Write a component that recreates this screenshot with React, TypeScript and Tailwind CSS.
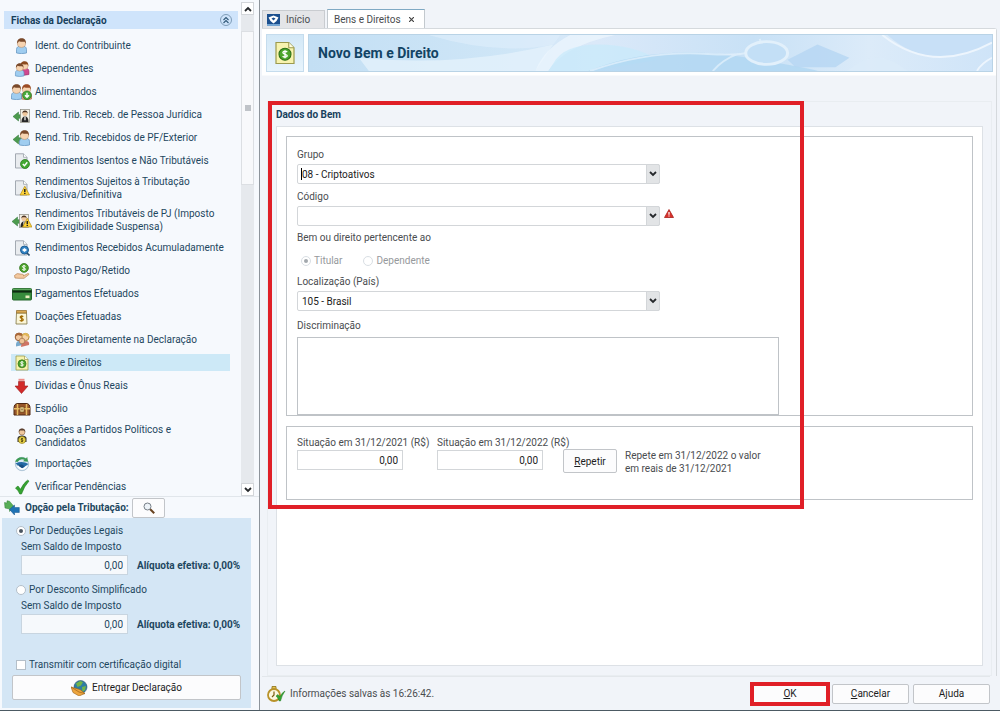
import { useState } from 'react'
import type { ReactElement, ReactNode } from 'react'

const Svg = ({ children, w = 16, h = 16 }: { children: ReactNode; w?: number; h?: number }): ReactElement => (
  <svg width={w} height={h} viewBox={`0 0 ${w} ${h}`} fill="none" aria-hidden="true" className="shrink-0">
    {children}
  </svg>
)
const Person = ({ x = 0, hair = '#7a4a2b', shirt = '#9fcdf0', edge = '#5b8fbd' }: { x?: number; hair?: string; shirt?: string; edge?: string }) => (
  <g transform={`translate(${x} 0)`}>
    <path d="M.5 15V11.500C.5 9 2.500 7.800 5.500 7.800S10.500 9 10.500 11.500V15Q5.500 16.400.5 15Z" fill={shirt} stroke={edge} strokeWidth=".7" />
    <circle cx="5.500" cy="5.300" r="4.100" fill="#f6d3b0" stroke="#b98a62" strokeWidth=".5" />
    <path d="M1.200 5.600C.8 2 3 .3 5.700.3S10.200 2 9.800 5.800L8.700 3.700Q5.500 4.100 3 3.200Z" fill={hair} />
  </g>
)
const Doc = ({ fill = '#e9ecef', edge = '#9aa2aa' }: { fill?: string; edge?: string }) => (
  <>
    <path d="M1.500.8h8l3.500 3.500V15h-11.500Z" fill={fill} stroke={edge} strokeWidth=".9" />
    <path d="M9.500.8v3.500H13" fill="#fff" stroke={edge} strokeWidth=".8" />
  </>
)
const Coin = ({ cx = 8, cy = 8, r = 4 }: { cx?: number; cy?: number; r?: number }) => (
  <g transform={`translate(${cx} ${cy}) scale(${r / 4})`}>
    <circle r="4" fill="#4da52c" stroke="#2c6f17" strokeWidth=".7" />
    <path d="M1.500-1.400C.8-2.200-1.500-2.200-1.400-1S1.500.1 1.500 1.100-.8 2.200-1.600 1.400M0-2.700v5.400" stroke="#fff" strokeWidth=".9" />
  </g>
)
const LeftArrow = () => <path d="M0 9.500 5.500 5v2.700H9v3.600H5.500V14Z" fill="#4c9b4e" stroke="#2f7437" strokeWidth=".5" />
const Warning = ({ x, y }: { x: number; y: number }) => (
  <g transform={`translate(${x} ${y})`}>
    <path d="M4.300-.8 9 8H-.4Z" fill="#ffd43a" stroke="#b08a12" strokeWidth=".7" />
    <path d="M4.300 2v3M4.300 5.800v1.200" stroke="#222" strokeWidth="1.500" />
  </g>
)
const Suit = ({ x }: { x: number }) => (
  <g transform={`translate(${x} 0)`}>
    <rect x=".5" y="2.500" width="9" height="13" fill="#f3f0e6" stroke="#8b8b80" strokeWidth=".7" />
    <circle cx="5" cy="6.500" r="2.500" fill="#efc79d" />
    <path d="M2.400 6.500Q2.300 3.500 5 3.500T7.600 6.500L6.500 5.200H3.500Z" fill="#4c3424" />
    <path d="M1.500 15Q1.500 9.500 5 9.500T8.500 15Z" fill="#272727" />
    <path d="M5 9.700v3.500" stroke="#fff" strokeWidth="1.200" />
  </g>
)
const BensIcon = ({ size = 16 }: { size?: number }) => (
  <svg width={size} height={size} viewBox="0 0 16 16" fill="none" aria-hidden="true" className="shrink-0">
    <path d="M2 1h8.500L14 4.500V15H2Z" fill="#f7f3ae" stroke="#9c9a4d" strokeWidth=".8" />
    <path d="M10.500 1v3.500H14" fill="#fffde0" stroke="#9c9a4d" strokeWidth=".7" />
    <Coin cx={8} cy={8.800} r={4} />
  </svg>
)
const Globe = () => (
  <>
    <circle cx="8" cy="8" r="6.700" fill="#d9e8f4" stroke="#8aa9c1" strokeWidth=".6" />
    <path d="M1.500 7.500Q8 4.500 14.500 8L8 12.500Z" fill="#246ba6" />
    <path d="M3 9 8 12.500l2.500-2.200L8 8.500Z" fill="#184f83" />
    <path d="M3.500 9.800Q8 16 12.800 10.200" stroke="#fff" strokeWidth="1.500" />
  </>
)

const fichas: { label: string; icon: ReactElement; tall?: boolean }[] = [
  { label: 'Ident. do Contribuinte', icon: <Svg><Person x={2} /></Svg> },
  {
    label: 'Dependentes',
    icon: <Svg><g transform="translate(5.500 0) scale(.9)"><Person shirt="#d0488f" edge="#93306a" hair="#8a4a1e" /></g><g transform="translate(1 2) scale(.86)"><Person /></g></Svg>
  },
  {
    label: 'Alimentandos',
    icon: <Svg w={21}><Person x={10} shirt="#e2a47c" edge="#a86e4c" hair="#9b4c25" /><Person /><circle cx="16" cy="11.300" r="4.300" fill="#49ab3c" stroke="#25751f" strokeWidth=".7" /><path d="M16 8.700v4M14 11.200l2 2 2-2" stroke="#fff" strokeWidth="1.400" /></Svg>
  },
  { label: 'Rend. Trib. Receb. de Pessoa Jurídica', icon: <Svg w={17}><LeftArrow /><Suit x={7} /></Svg> },
  { label: 'Rend. Trib. Recebidos de PF/Exterior', icon: <Svg w={17}><LeftArrow /><Person x={6} /></Svg> },
  {
    label: 'Rendimentos Isentos e Não Tributáveis',
    icon: <Svg><Doc /><circle cx="11" cy="11" r="4.500" fill="#43a833" stroke="#257519" strokeWidth=".7" /><path d="m8.800 11 1.700 1.800 2.800-3.500" stroke="#fff" strokeWidth="1.400" /></Svg>
  },
  { label: 'Rendimentos Sujeitos à Tributação Exclusiva/Definitiva', icon: <Svg><Doc /><Warning x={6.500} y={7} /></Svg>, tall: true },
  { label: 'Rendimentos Tributáveis de PJ (Imposto com Exigibilidade Suspensa)', icon: <Svg w={20}><LeftArrow /><Suit x={7} /><Warning x={11} y={7} /></Svg>, tall: true },
  {
    label: 'Rendimentos Recebidos Acumuladamente',
    icon: <Svg><Doc /><circle cx="10.500" cy="10" r="4" fill="#3384c4" stroke="#1c5c93" /><path d="m8 10 2.500-2 2.500 2-2.500 2Z" fill="#fff" /><path d="m13 13 2.500 2.500" stroke="#284f70" strokeWidth="1.600" /></Svg>
  },
  {
    label: 'Imposto Pago/Retido',
    icon: <Svg><Coin cx={10} cy={4.900} r={4.400} /><path d="M.5 12.500Q3 9.500 6 11l3 .4q1.300.5.3 1.500l4.500-2.300q1.600-.2 1 1L10 15.300H5L1 15Z" fill="#f3c9a0" stroke="#b98555" strokeWidth=".7" /></Svg>
  },
  {
    label: 'Pagamentos Efetuados',
    icon: <Svg w={20}><rect x=".5" y="2.500" width="19" height="11.500" rx="1" fill="#378b3c" stroke="#23662a" /><path d="M.5 5.500h19" stroke="#0e2a12" strokeWidth="2.200" /><path d="M1 3.200h18" stroke="#7cc07b" strokeWidth=".8" /><rect x="13.500" y="9.500" width="4" height="2.600" fill="#e9efc0" /></Svg>
  },
  {
    label: 'Doações Efetuadas',
    icon: <Svg><path d="M2.500 4h10l.5 11H2Z" fill="#fbf6d8" stroke="#7e7440" strokeWidth=".8" /><path d="M2.500 1.500h10V4h-10Z" fill="#d9a954" stroke="#8e6825" strokeWidth=".7" /><path d="M9.300 7.700C8.600 6.800 6.100 7 6.200 8.200S9.400 9.300 9.300 10.700 6.500 12.300 5.800 11.200M7.700 6.200v6.600" stroke="#a16b00" strokeWidth="1.200" /></Svg>
  },
  {
    label: 'Doações Diretamente na Declaração',
    icon: <Svg><circle cx="5" cy="5" r="3.800" fill="#f2c9a0" stroke="#935a33" /><path d="M1 5Q1 .8 5 .8T9 4Q6 4 4 3Z" fill="#a8683a" /><circle cx="11.500" cy="5" r="3.600" fill="#f5d2a8" stroke="#b58b3c" /><path d="M8 4Q9 .5 12 1t3.300 4Q12 4.500 11 3Z" fill="#e0b75a" /><path d="M2 14.500Q1.500 9 5 9t4 4Z" fill="#79aacd" /><path d="M7 15Q7 9 11.500 9T15 13Z" fill="#cf7565" /><circle cx="8" cy="9" r="2.800" fill="#eec397" stroke="#936140" strokeWidth=".6" /></Svg>
  },
  { label: 'Bens e Direitos', icon: <BensIcon /> },
  {
    label: 'Dívidas e Ônus Reais',
    icon: <Svg><path d="M4.500.8h6v2h-6Z" fill="#ef8c87" /><path d="M4.500 3.500h6V8H14l-6.500 7.500L1 8h3.500Z" fill="#d22a2a" stroke="#9c1c1c" strokeWidth=".6" /></Svg>
  },
  {
    label: 'Espólio',
    icon: <Svg w={18}><path d="M1 7Q1 2.500 5 2.500h8Q17 2.500 17 7v7H1Z" fill="#96552a" stroke="#4e2812" /><path d="M1 7.800h16M4.500 3v11M13.500 3v11" stroke="#e8bd62" strokeWidth="1.500" /><rect x="7" y="6" width="4" height="5" fill="#f7e4a0" stroke="#6b4512" strokeWidth=".7" /><path d="M9 7.500v2" stroke="#4e2812" /></Svg>
  },
  {
    label: 'Doações a Partidos Políticos e Candidatos',
    icon: <Svg><circle cx="8" cy="4" r="3" fill="#efc79d" stroke="#8c6748" strokeWidth=".6" /><path d="M4.800 4Q4.500.5 8 .5T11.200 4L10 2.600H6Z" fill="#5b4030" /><path d="M3.500 14V10Q4 7.500 8 7.500t4.500 2.500v4Z" fill="#2f2f2f" /><circle cx="8" cy="12" r="3.500" fill="#f3dc4f" stroke="#8f7c18" strokeWidth=".7" /><path d="M9.200 10.900C8.500 10.200 6.900 10.400 7 11.300s2.200.6 2.100 1.500-1.700 1-2.300.3M8 9.800v4.500" stroke="#3c3406" strokeWidth=".8" /></Svg>,
    tall: true
  },
  { label: 'Importações', icon: <Svg><Globe /><path d="M1 5.500Q5-.8 12 2.500l1.200-1.700.8 5-5-.6 1.500-1.500Q6 2 3.500 6Z" fill="#3d9b54" /></Svg> },
  { label: 'Verificar Pendências', icon: <Svg><path d="M1.500 9 4 7l2.500 3.300Q9.500 4 13.500 1.200L15 2Q10 7.500 7.500 15H5.800Q4 11 1.500 9Z" fill="#35a331" stroke="#1e7a1f" strokeWidth=".6" /></Svg> }
]

const Chevron = ({ up = false }: { up?: boolean }) => (
  <svg width="8" height="6" viewBox="0 0 8 6" fill="none" aria-hidden="true">
    <path d={up ? 'M1 5l3-3 3 3' : 'M1 1l3 3 3-3'} stroke="#26292c" strokeWidth="1.800" />
  </svg>
)

const Combo = ({ id, label, options, caret }: { id: string; label: string; options: string[]; caret?: boolean }) => (
  <div className="flex flex-col gap-[3px]">
    <label htmlFor={id}>{label}</label>
    <div className="relative w-[363px]">
      <select id={id} className="block h-5 w-full appearance-none rounded-[2px] border border-[#d3d6d9] bg-white pl-1 text-[10px] text-[#1c1c1c]">
        {options.map(o => (
          <option key={o}>{o}</option>
        ))}
      </select>
      {caret && <span className="absolute top-1 left-1 h-3 w-px bg-black" />}
      <span className="pointer-events-none absolute inset-y-0 right-0 flex w-3.5 items-center justify-center rounded-r-[2px] border border-[#d3d6d9] bg-[#e2e4e6]">
        <Chevron />
      </span>
    </div>
  </div>
)

const radio =
  "relative size-2.5 appearance-none rounded-full border border-[#b4bfc9] bg-white checked:after:absolute checked:after:inset-0.5 checked:after:rounded-full checked:after:bg-[#4b5660] checked:after:content-['']"
const button = 'flex items-center justify-center rounded-[2px] border border-[#c2c5c9] bg-[#fcfcfd] text-[#1d1d1d]'

const Sidebar = () => {
  const [active, setActive] = useState('Bens e Direitos')
  const [modo, setModo] = useState('legais')
  return (
    <aside className="flex w-[260px] shrink-0 flex-col border-r border-[#8d949b] bg-[#f6f9fd] text-[#1e4760]">
      <div className="flex h-[497px] border-b border-[#e1e6eb] pl-1">
        <div className="flex-1 pt-[11px]">
          <h2 className="flex h-[18px] items-center justify-between bg-[#cfe4fb] pr-1.5 pl-[7px] font-bold text-[#17405c]">
            Fichas da Declaração
            <button type="button" aria-label="Recolher" className="flex size-3 items-center justify-center rounded-full border border-[#7f9db8]">
              <svg width="8" height="8" viewBox="0 0 8 8" fill="none"><path d="M1.500 4 4 1.500 6.500 4M1.500 7 4 4.500 6.500 7" stroke="#2f5877" strokeWidth="1.100" /></svg>
            </button>
          </h2>
          <nav className="mt-2 mr-2 ml-[7px] flex flex-col gap-1.5">
            {fichas.map(f => (
              <a
                key={f.label}
                href="#ficha"
                onClick={() => setActive(f.label)}
                className={`flex items-center gap-[3px] ${f.tall ? 'h-[26px]' : 'h-[17px]'} ${active === f.label ? 'bg-[#cde9f7]' : ''}`}
              >
                <span className="flex w-[21px] shrink-0 justify-center">{f.icon}</span>
                <span className={f.tall ? 'max-w-[185px]' : 'whitespace-nowrap'}>{f.label}</span>
              </a>
            ))}
          </nav>
        </div>
        <div className="mt-0.5 mr-[5px] ml-[3px] flex w-[13px] flex-col bg-[#e6e9ed]">
          <button type="button" aria-label="Subir" className="flex h-[13px] items-center justify-center border border-[#d3d6da] bg-white"><Chevron up /></button>
          <div className="mt-4 flex h-[154px] items-center justify-center border border-[#dcdfe3] bg-[#f8f9fb]">
            <span className="size-1.5 bg-[#bfc3c8]" />
          </div>
          <button type="button" aria-label="Descer" className="mt-auto flex h-[13px] items-center justify-center border border-[#d3d6da] bg-white"><Chevron /></button>
        </div>
      </div>
      <div className="flex h-[21px] items-center pl-1">
        <Svg w={17}>
          <path d="M3 .8V3L.5 2.500 1 8l4.500 1V11.500L10 6.500 5.500 1.200Z" fill="#57ae57" stroke="#37803a" strokeWidth=".5" />
          <path d="M10.500 5 5.500 9.500l5 5.500v-2.500h4.800v-5h-4.800Z" fill="#1e72b4" stroke="#12538a" strokeWidth=".5" />
        </Svg>
        <span className="ml-1 flex-1 font-bold whitespace-nowrap">Opção pela Tributação:</span>
        <button type="button" aria-label="Pesquisar" className={`${button} mr-[94px] h-5 w-[33px]`}>
          <svg width="12" height="12" viewBox="0 0 12 12" fill="none"><circle cx="4.500" cy="4.500" r="3.500" fill="#edf3f8" stroke="#777f87" /><path d="m7.200 7.200 4 4" stroke="#67421f" strokeWidth="2" /></svg>
        </button>
      </div>
      <form className="mr-2 mb-0.5 ml-0.5 flex-1 bg-[#d4e6f5] px-2.5 pt-1.5 pb-2">
        {[
          { id: 'legais', label: 'Por Deduções Legais' },
          { id: 'simplificado', label: 'Por Desconto Simplificado' }
        ].map(o => (
          <div key={o.id} className="mb-2">
            <label className="flex items-center gap-[3px] pl-1">
              <input type="radio" name="modo" checked={modo === o.id} onChange={() => setModo(o.id)} className={radio} />
              {o.label}
            </label>
            <label htmlFor={o.id} className="mt-[3px] block pl-[9px]">Sem Saldo de Imposto</label>
            <div className="mt-0.5 flex items-center gap-[9px] pl-[9px]">
              <input id={o.id} readOnly value="0,00" className="h-5 w-[107px] border border-[#c8d5e0] bg-[#f6f9fc] pr-1 text-right" />
              <strong className="whitespace-nowrap">Alíquota efetiva: 0,00%</strong>
            </div>
          </div>
        ))}
        <label className="mt-6 flex items-center gap-[3px] pl-1">
          <input type="checkbox" className="size-2.5 appearance-none border border-[#b4bfc9] bg-white" />
          Transmitir com certificação digital
        </label>
        <button type="button" className={`${button} mt-1 h-[25px] w-full gap-1`}>
          <Svg w={17}>
            <circle cx="9.500" cy="7" r="6.500" fill="#2d7da5" stroke="#30546d" strokeWidth=".6" />
            <path d="M5 3.500 9 1l3 1-2 3.500L6.500 7ZM11 7l4-1-1 4-2.500 2Z" fill="#73b548" />
            <path d="M0 7 9 9.500l5 4L8 16l-6-3.500Z" fill="#eda53e" stroke="#9a6218" strokeWidth=".6" />
            <path d="m0 7 8 5 6 1.500" stroke="#a86a1c" strokeWidth=".8" />
          </Svg>
          Entregar Declaração
        </button>
      </form>
    </aside>
  )
}

const Banner = () => (
  <svg viewBox="0 0 685 38" preserveAspectRatio="none" aria-hidden="true" className="absolute inset-0 size-full">
    <defs>
      <linearGradient id="bg" x1="0" x2="1">
        <stop offset="0" stopColor="#c3dff4" />
        <stop offset=".3" stopColor="#cfe6f7" />
        <stop offset=".42" stopColor="#dbe9f9" />
        <stop offset=".65" stopColor="#c8e1f6" />
        <stop offset=".82" stopColor="#dcebf9" />
        <stop offset="1" stopColor="#cfe4f8" />
      </linearGradient>
    </defs>
    <path d="M0 0h685v38H0Z" fill="url(#bg)" />
    <path d="M50 24Q150 34 245 10L227 38H60Z" fill="#e4f1fb" opacity=".8" />
    <path d="M120 0Q190 22 245 10L252 0Z" fill="#e0effb" opacity=".6" />
    <path d="M227 38Q236 14 262 0h45Q255 12 240 38Z" fill="#eef6fd" opacity=".7" />
    <path d="M245 30Q255 10 290 10t60 16L285 38h-45Z" fill="#c8eafb" opacity=".7" />
    <path d="M280 38Q350 8 440 24T505 38Z" fill="#add5f2" opacity=".75" />
    <path d="M282 38Q340 16 400 20T452 4M405 38Q415 26 430 20" fill="none" stroke="#e6f2fc" strokeWidth="2" opacity=".7" />
    <ellipse cx="459" cy="19" rx="21" ry="12" fill="#c3dff6" stroke="#e2f0fb" strokeWidth="3" />
    <path d="M480 26 510 10l32 14-14 10h-40Z" fill="#b5d6f3" opacity=".8" />
    <path d="M580 0Q625 42 685 8V0Z" fill="#c8e0f7" />
    <path d="M575 0Q625 42 685 8M670 38q4-8 15-14" fill="none" stroke="#edf5fd" strokeWidth="2" />
    <path d="M540 38Q570 10 600 38Z" fill="#dcebf9" opacity=".7" />
  </svg>
)

const Valor = ({ id, label }: { id: string; label: string }) => (
  <div className="w-[140px] whitespace-nowrap">
    <label htmlFor={id} className="block">{label}</label>
    <input id={id} defaultValue="0,00" className="mt-px block h-5 w-[106px] border border-[#d3d6d9] bg-white pr-1 text-right text-[#1c1c1c]" />
  </div>
)

const App = (): ReactElement => (
  <div className="flex min-h-screen border-b border-[#4c5a63] bg-[#f1f4f9] font-[Roboto,sans-serif] text-[10px] leading-[13px] text-[#4a4d50]">
    <Sidebar />
    <main className="flex min-w-0 flex-1 flex-col pt-[9px] pl-0.5">
      <div className="flex items-end gap-0.5">
        <button type="button" className="flex h-[18px] w-[63px] items-center gap-1.5 border border-b-0 border-[#c9ccd0] bg-[#e4e5e8] pl-1">
          <svg width="13" height="12" viewBox="0 0 13 12"><path d="M0 0h13v12H0Z" fill="#1b4f8e" /><path d="M1.500 3.500 6.500 1.500l5 2-2 3.500-3 2.500-3-2.500Z" fill="#fff" /><path d="m4.500 4.500 2-1 2 1-2 2Z" fill="#1b4f8e" /><path d="M0 10h13v2H0Z" fill="#73a4d2" /></svg>
          Início
        </button>
        <button type="button" className="-mb-px flex h-5 w-[98px] items-center gap-2 border border-b-0 border-t-[#7fa9c4] border-[#c3c9ce] bg-white pl-1.5">
          <span className="whitespace-nowrap">Bens e Direitos</span>
          <svg width="5" height="5" viewBox="0 0 5 5"><path d="M0 0l5 5M5 0 0 5" stroke="#444" strokeWidth="1.200" /></svg>
        </button>
      </div>
      <div className="mr-[3px] flex flex-1 flex-col rounded-tr-[3px] border border-b-0 border-l-0 border-[#d5d9dd]">
        <header className="flex gap-1 border-b border-[#f8fafc] bg-white pt-[5px] pr-[3px] pb-[3px] pl-1">
          <div className="flex size-[38px] items-center justify-center border border-[#c5dced] bg-linear-to-b from-[#d3e8f7] to-[#e8f4fc]">
            <BensIcon size={24} />
          </div>
          <div className="relative flex h-[38px] flex-1 items-center border border-[#b9d3e6]">
            <Banner />
            <h1 className="relative pl-[9px] text-sm leading-4 font-bold text-[#134464]">Novo Bem e Direito</h1>
          </div>
        </header>
        <div className="mt-[25px] mr-1 ml-[5px] flex flex-1 flex-col">
          <section className="relative flex flex-1 flex-col border border-[#e9edf1] px-2 pt-1.5 pb-[9px]">
            <h2 className="font-bold text-[#17405c]">Dados do Bem</h2>
            <form className="mt-[5px] flex flex-1 flex-col gap-2.5 border border-[#dde1e6] bg-white p-[9px]">
              <fieldset className="flex flex-col border border-[#bfc3c7] pt-[11px] pl-2.5">
                <Combo id="grupo" label="Grupo" options={['08 - Criptoativos']} caret />
                <div className="mt-1.5 flex items-center gap-1">
                  <Combo id="codigo" label="Código" options={['']} />
                  <svg width="10" height="9" viewBox="0 0 10 9" className="mt-2.5"><path d="M5 .5 9.500 8.500H.5Z" fill="#d8312c" stroke="#a81f1c" strokeWidth=".8" /><path d="M5 3v2.700M5 6.500v1" stroke="#fff" strokeWidth="1.200" /></svg>
                </div>
                <p className="mt-[5px]">Bem ou direito pertencente ao</p>
                <div className="mt-2.5 mb-2 flex gap-[21px] pl-1 text-[#96999c]">
                  <label className="flex items-center gap-[3px]">
                    <input type="radio" name="pertence" defaultChecked disabled className={`${radio} opacity-50`} />
                    Titular
                  </label>
                  <label className="flex items-center gap-[3px]">
                    <input type="radio" name="pertence" disabled className={`${radio} opacity-50`} />
                    Dependente
                  </label>
                </div>
                <Combo id="pais" label="Localização (País)" options={['105 - Brasil']} />
                <label htmlFor="discriminacao" className="mt-2">Discriminação</label>
                <textarea id="discriminacao" className="mt-[5px] block h-[78px] w-[482px] resize-none border border-[#bfc3c7] bg-white" />
              </fieldset>
              <fieldset className="border border-[#bfc3c7]">
                <div className="flex h-[72px] items-start pt-[9px] pl-2.5">
                  <Valor id="v2021" label="Situação em 31/12/2021 (R$)" />
                  <Valor id="v2022" label="Situação em 31/12/2022 (R$)" />
                  <button type="button" className={`${button} mt-[13px] -ml-3.5 h-6 w-[54px]`}><u>R</u>epetir</button>
                  <p className="mt-[13px] ml-2">
                    Repete em 31/12/2022 o valor<br />em reais de 31/12/2021
                  </p>
                </div>
              </fieldset>
            </form>
            {/* highlight frame over the form */}
            <div className="pointer-events-none absolute -top-px left-0 h-[408px] w-[536px] border-4 border-[#e01f27]" />
          </section>
        </div>
      </div>
      <footer className="mr-2.5 flex h-[34px] items-center gap-1 border-t border-[#e3e7eb] pl-1">
        <svg width="20" height="16" viewBox="0 0 20 16" fill="none">
          <path d="M6 .5h4v3H6Z" fill="#e3c352" stroke="#8c6f14" strokeWidth=".8" />
          <circle cx="8" cy="9" r="6" fill="#fbf7e2" stroke="#b8922a" strokeWidth="1.800" />
          <path d="M8 5.500V9L6 11" stroke="#7a5e10" strokeWidth="1.200" />
          <path d="m10 10 2-1.500 1.800 2.200Q16 6.500 19 5q-3 4-4.500 10h-1.200Q12 11.500 10 10Z" fill="#35a331" stroke="#1e7a1f" strokeWidth=".5" />
        </svg>
        <span className="flex-1">Informações salvas às 16:26:42.</span>
        <div className="flex items-center gap-1">
          <button type="button" className="h-6 w-20 border-4 border-[#e01f27] bg-[#fcfcfd] text-[#1d1d1d]"><u>O</u>K</button>
          <button type="button" className={`${button} -ml-0.5 h-5 w-[77px]`}><span><u>C</u>ancelar</span></button>
          <button type="button" className={`${button} h-5 w-[77px]`}><span>A<u>j</u>uda</span></button>
        </div>
      </footer>
    </main>
  </div>
)
export default App
